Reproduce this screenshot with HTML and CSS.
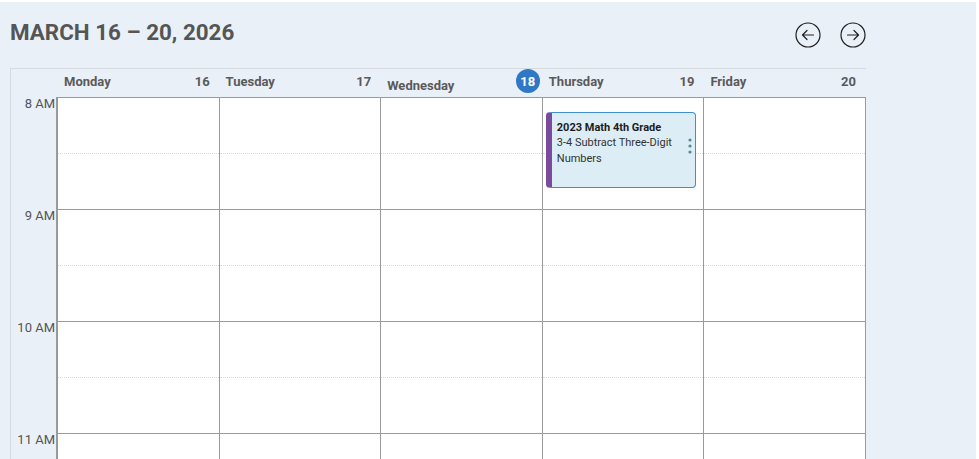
FILE: index.html
```html
<!DOCTYPE html>
<html lang="en">
<head>
<meta charset="utf-8">
<title>Week calendar</title>
<link rel="stylesheet" href="styles.css">
</head>
<body>
<div class="app">
  <div class="topbar">
    <h1 class="title">MARCH 16 – 20, 2026</h1>
    <div class="nav">
      <button class="nav-btn" aria-label="Previous week">
        <svg width="26" height="26" viewBox="0 0 26 26"><circle cx="13" cy="13" r="12" fill="none" stroke="#1f1f1f" stroke-width="1.2"/><path d="M18.5 13H7.5M12 8.5L7.5 13L12 17.5" fill="none" stroke="#1f1f1f" stroke-width="1.2" stroke-linecap="round" stroke-linejoin="round"/></svg>
      </button>
      <button class="nav-btn" aria-label="Next week">
        <svg width="26" height="26" viewBox="0 0 26 26"><circle cx="13" cy="13" r="12" fill="none" stroke="#1f1f1f" stroke-width="1.2"/><path d="M7.5 13H18.5M14 8.5L18.5 13L14 17.5" fill="none" stroke="#1f1f1f" stroke-width="1.2" stroke-linecap="round" stroke-linejoin="round"/></svg>
      </button>
    </div>
  </div>

  <div class="cal">
    <div class="cal-head">
      <div class="head-gutter"></div>
      <div class="day-head"><span class="day-name">Monday</span><span class="day-num">16</span></div>
      <div class="day-head"><span class="day-name">Tuesday</span><span class="day-num">17</span></div>
      <div class="day-head day-head--today"><span class="day-name">Wednesday</span><span class="day-badge">18</span></div>
      <div class="day-head"><span class="day-name">Thursday</span><span class="day-num">19</span></div>
      <div class="day-head"><span class="day-name">Friday</span><span class="day-num">20</span></div>
    </div>

    <div class="cal-body">
      <div class="times">
        <div class="hour-label">8 AM</div>
        <div class="hour-label">9 AM</div>
        <div class="hour-label">10 AM</div>
        <div class="hour-label">11 AM</div>
      </div>
      <div class="days">
        <div class="day-col">
          <div class="slot"></div><div class="slot slot--hour"></div>
          <div class="slot"></div><div class="slot slot--hour"></div>
          <div class="slot"></div><div class="slot slot--hour"></div>
          <div class="slot"></div><div class="slot slot--hour"></div>
        </div>
        <div class="day-col">
          <div class="slot"></div><div class="slot slot--hour"></div>
          <div class="slot"></div><div class="slot slot--hour"></div>
          <div class="slot"></div><div class="slot slot--hour"></div>
          <div class="slot"></div><div class="slot slot--hour"></div>
        </div>
        <div class="day-col">
          <div class="slot"></div><div class="slot slot--hour"></div>
          <div class="slot"></div><div class="slot slot--hour"></div>
          <div class="slot"></div><div class="slot slot--hour"></div>
          <div class="slot"></div><div class="slot slot--hour"></div>
        </div>
        <div class="day-col">
          <div class="slot"></div><div class="slot slot--hour"></div>
          <div class="slot"></div><div class="slot slot--hour"></div>
          <div class="slot"></div><div class="slot slot--hour"></div>
          <div class="slot"></div><div class="slot slot--hour"></div>
          <div class="event">
            <div class="event-title">2023 Math 4th Grade</div>
            <div class="event-desc">3-4 Subtract Three-Digit Numbers</div>
            <svg class="event-menu" width="4" height="16" viewBox="0 0 4 16"><circle cx="2" cy="2" r="1.6" fill="#5d8797"/><circle cx="2" cy="8" r="1.6" fill="#5d8797"/><circle cx="2" cy="14" r="1.6" fill="#5d8797"/></svg>
          </div>
        </div>
        <div class="day-col">
          <div class="slot"></div><div class="slot slot--hour"></div>
          <div class="slot"></div><div class="slot slot--hour"></div>
          <div class="slot"></div><div class="slot slot--hour"></div>
          <div class="slot"></div><div class="slot slot--hour"></div>
        </div>
      </div>
    </div>
  </div>
</div>
</body>
</html>
```

FILE: styles.css
```css
* { box-sizing: border-box; }

html, body {
  margin: 0;
  padding: 0;
  background: #ffffff;
  font-family: Roboto, "Liberation Sans", Arial, sans-serif;
  overflow: hidden;
}

.app {
  margin-top: 2px;
  width: 976px;
  height: 457px;
  background: #eaf0f8;
  padding: 0 10px;
  overflow: hidden;
}

.topbar {
  width: 856px;
  height: 66px;
  display: flex;
  justify-content: space-between;
  align-items: flex-start;
}

.title {
  margin: 16px 0 0 0;
  font-size: 22.4px;
  line-height: 28px;
  font-weight: 700;
  color: #555555;
}

.nav {
  margin-top: 20px;
  display: flex;
  gap: 19px;
}

.nav-btn {
  width: 26px;
  height: 26px;
  padding: 0;
  border: 0;
  background: transparent;
  display: block;
  cursor: pointer;
}
.nav-btn svg { display: block; }

.cal {
  width: 856px;
  border-top: 1px solid #d6d9de;
  border-left: 1px solid #d6d9de;
}

.cal-head {
  display: grid;
  grid-template-columns: 47px repeat(5, 1fr);
  height: 28px;
}

.day-head {
  display: flex;
  justify-content: space-between;
  align-items: center;
  padding: 0 10px 3px 6px;
  font-size: 13px;
  font-weight: 700;
  color: #5a5a5a;
}

.day-head--today {
  padding-right: 3px;
  padding-bottom: 0;
}
.day-head--today .day-name {
  margin-top: 5px;
}

.day-badge {
  width: 24px;
  height: 24px;
  border-radius: 50%;
  background: #2f78c6;
  color: #ffffff;
  display: flex;
  align-items: center;
  justify-content: center;
  font-size: 13px;
  font-weight: 700;
  margin-top: -4px;
}

.cal-body {
  display: flex;
}

.times {
  width: 45px;
  flex: none;
}

.hour-label {
  height: 112px;
  text-align: right;
  padding-right: 1px;
  font-size: 13px;
  line-height: 13px;
  color: #555555;
}

.days {
  flex: 1 1 0;
  display: grid;
  grid-template-columns: repeat(5, 1fr);
  border-left: 2px solid #9a9a9a;
  border-top: 1px solid #9a9a9a;
  background: #ffffff;
}

.day-col {
  position: relative;
  border-right: 1px solid #9a9a9a;
}

.slot {
  height: 56px;
  border-bottom: 1px dotted #d9d9d9;
}

.slot--hour {
  border-bottom: 1px solid #9a9a9a;
}

.event {
  position: absolute;
  top: 14px;
  left: 3px;
  width: 150px;
  height: 76px;
  background: #dcedf5;
  border: 1px solid #3f8dd2;
  border-left: 6px solid #7a4a9c;
  border-radius: 4px;
  padding: 7px 16px 0 5px;
  font-size: 11px;
  color: #222222;
}

.event-title {
  font-weight: 700;
  line-height: 15px;
  color: #1c1c1c;
}

.event-desc {
  line-height: 16px;
  color: #333333;
}

.event-menu {
  position: absolute;
  right: 3px;
  top: 25px;
  display: block;
}
```
